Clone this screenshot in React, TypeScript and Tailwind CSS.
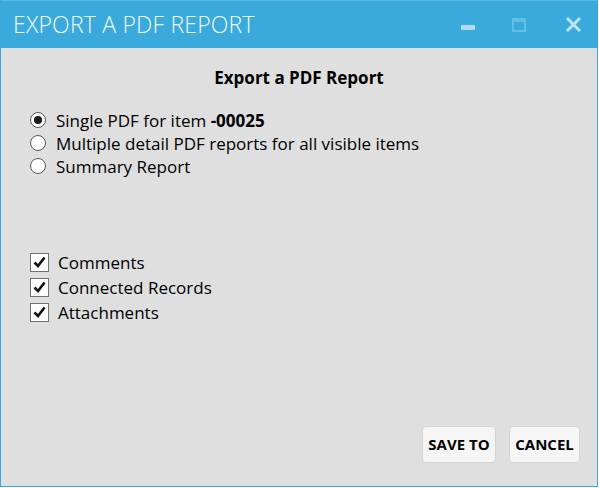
import React, { useState } from "react";

const font = { fontFamily: '"Segoe UI", "Open Sans", "Noto Sans", sans-serif' };

function Radio({ checked }: { checked: boolean }) {
  return (
    <span className="flex h-[16px] w-[16px] shrink-0 items-center justify-center rounded-full border border-[#555] bg-white">
      {checked && <span className="h-[8px] w-[8px] rounded-full bg-[#1a1a1a]" />}
    </span>
  );
}

function Check({ checked }: { checked: boolean }) {
  return (
    <span className="flex h-[19px] w-[19px] shrink-0 items-center justify-center border border-[#707070] bg-white">
      {checked && (
        <svg width="13" height="12" viewBox="0 0 13 12">
          <path d="M1.5 6.5 L5 10 L11.5 1.5" fill="none" stroke="#111" strokeWidth="2.6" />
        </svg>
      )}
    </span>
  );
}

export default function App() {
  const [mode, setMode] = useState<number>(0);
  const [opts, setOpts] = useState<boolean[]>([true, true, true]);

  const radios = [
    <>
      Single PDF for item <b>-00025</b>
    </>,
    <>Multiple detail PDF reports for all visible items</>,
    <>Summary Report</>,
  ];
  const checks = ["Comments", "Connected Records", "Attachments"];

  return (
    <div className="h-[488px] w-[599px] bg-white" style={font}>
      <div className="flex h-[487px] w-[598px] flex-col border border-t-0 border-[#3aa9dc] bg-[#dfdfdf]">
        <div className="flex h-[48px] items-center border-t border-[#5cb8e4] bg-[#3aaadc] pl-[12px]">
          <div className="flex-1 text-[23px] font-light leading-none tracking-[0.2px] text-[#f2f9fd]">
            EXPORT A PDF REPORT
          </div>
          <div className="flex h-full items-center">
            <div className="flex h-full w-[50px] items-center justify-center pt-[6px]">
              <span className="h-[5px] w-[14px] bg-[#aedcf2]" />
            </div>
            <div className="flex h-full w-[52px] items-center justify-center">
              <span className="h-[14px] w-[14px] border-[2px] border-t-[4px] border-[#63bde6]" />
            </div>
            <div className="flex h-full w-[52px] items-center justify-center pl-[4px]">
              <svg width="17" height="17" viewBox="0 0 17 17">
                <path d="M2 2 L15 15 M15 2 L2 15" stroke="#bfe4f5" strokeWidth="3" />
              </svg>
            </div>
          </div>
        </div>

        <div className="flex flex-1 flex-col pl-[29px] pr-[17px]">
          <div className="mt-[17px] pr-[12px] text-center text-[17px] font-bold text-black">
            Export a PDF Report
          </div>

          <div className="mt-[18px] flex flex-col">
            {radios.map((r, i) => (
              <label
                key={i}
                className="flex h-[23px] cursor-pointer items-center gap-[10px] text-[17px] text-black"
                onClick={() => setMode(i)}
              >
                <Radio checked={mode === i} />
                <span className="leading-none">{r}</span>
              </label>
            ))}
          </div>

          <div className="mt-[72px] flex flex-col">
            {checks.map((c, i) => (
              <label
                key={c}
                className="flex h-[25px] cursor-pointer items-center gap-[9px] text-[17px] text-black"
                onClick={() => setOpts(opts.map((o, j) => (j === i ? !o : o)))}
              >
                <Check checked={opts[i]} />
                <span className="leading-none">{c}</span>
              </label>
            ))}
          </div>

          <div className="mt-auto mb-[23px] flex justify-end gap-[13px]">
            <button className="h-[37px] w-[74px] rounded-[4px] border border-[#d4d4d4] bg-[#f5f5f5] text-[15px] font-bold text-black">
              SAVE TO
            </button>
            <button className="h-[37px] w-[71px] rounded-[4px] border border-[#d4d4d4] bg-[#f5f5f5] text-[15px] font-bold text-black">
              CANCEL
            </button>
          </div>
        </div>
      </div>
    </div>
  );
}
